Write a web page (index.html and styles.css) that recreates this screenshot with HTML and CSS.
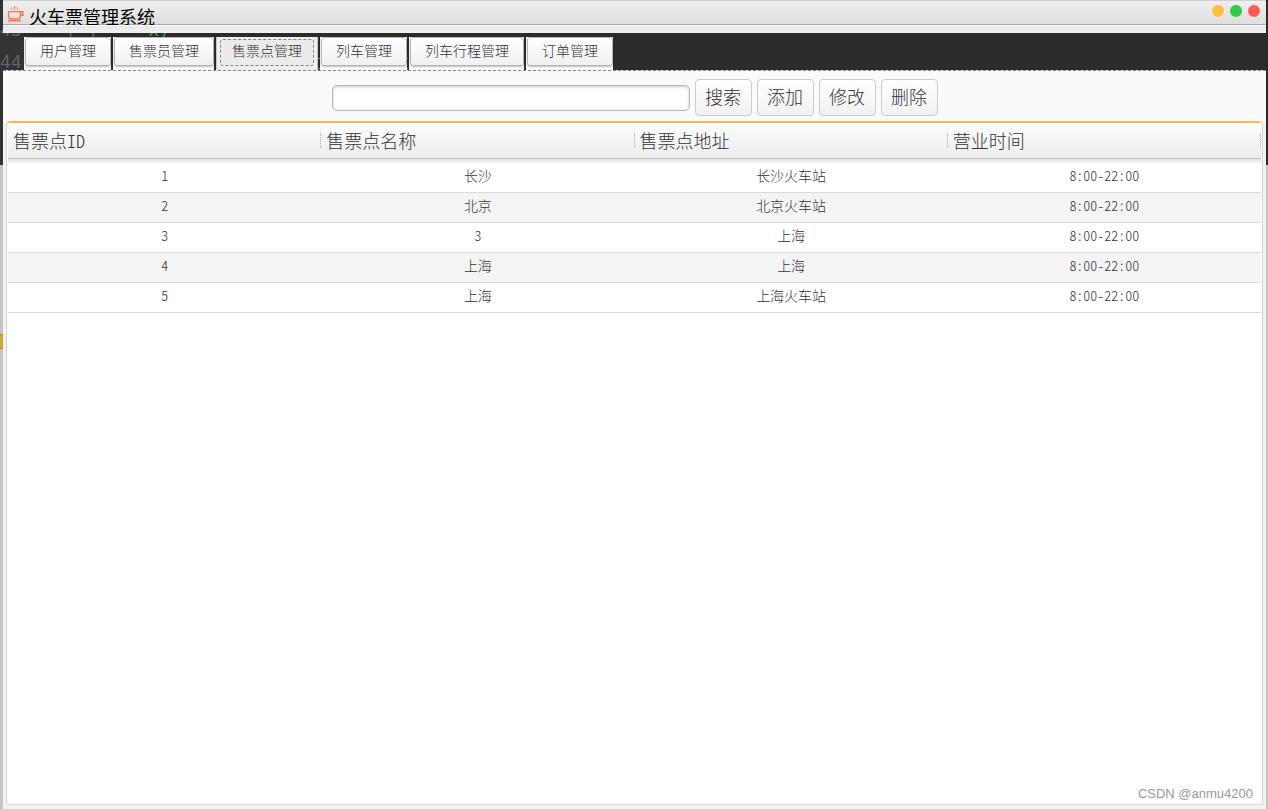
FILE: index.html
```html
<!DOCTYPE html>
<html lang="zh-CN">
<head>
<meta charset="utf-8">
<title>火车票管理系统</title>
<link rel="stylesheet" href="styles.css">
</head>
<body>
<div class="desktop" aria-hidden="true">
  <div class="editor">
    <div class="line cut"><span>43</span><span class="punct">[ ]</span><span class="string">x)</span></div>
    <div class="line"><span>44</span></div>
    <div class="mark"></div>
  </div>
  <div class="tool"></div>
</div>
<div class="window">
  <header class="titlebar">
    <svg class="logo" width="18" height="18" viewBox="0 0 18 18" fill="none" stroke="#fb7550" stroke-width="1.4">
      <path d="M1.6 6.6h11.8v4.4q0 3-3 3H4.6q-3 0-3-3z"/>
      <path d="M13.4 6.7h2.5v3.6h-2.6M1 15.8h13"/>
      <path d="M4.5 2.5v2M7.5 1v3.5M10.5 2.5v2" stroke-width="1"/>
    </svg>
    <h1 class="title">火车票管理系统</h1>
    <div class="controls">
      <button class="dot min" aria-label="最小化"></button>
      <button class="dot max" aria-label="最大化"></button>
      <button class="dot close" aria-label="关闭"></button>
    </div>
  </header>
  <div class="trim"></div>
  <nav class="tabs">
    <div class="tab"><button>用户管理</button></div>
    <div class="tab"><button>售票员管理</button></div>
    <div class="tab active"><button>售票点管理</button></div>
    <div class="tab"><button>列车管理</button></div>
    <div class="tab"><button>列车行程管理</button></div>
    <div class="tab"><button>订单管理</button></div>
  </nav>
  <main class="content">
    <form class="search">
      <input class="field" type="text" aria-label="搜索">
      <button class="action" type="button">搜索</button>
      <button class="action" type="button">添加</button>
      <button class="action" type="button">修改</button>
      <button class="action" type="button">删除</button>
    </form>
    <section class="panel">
      <table class="grid">
        <thead>
          <tr><th><div>售票点ID</div></th><th><div>售票点名称</div></th><th><div>售票点地址</div></th><th><div>营业时间</div></th></tr>
        </thead>
        <tbody>
          <tr><td>1</td><td>长沙</td><td>长沙火车站</td><td>8:00-22:00</td></tr>
          <tr><td>2</td><td>北京</td><td>北京火车站</td><td>8:00-22:00</td></tr>
          <tr><td>3</td><td>3</td><td>上海</td><td>8:00-22:00</td></tr>
          <tr><td>4</td><td>上海</td><td>上海</td><td>8:00-22:00</td></tr>
          <tr><td>5</td><td>上海</td><td>上海火车站</td><td>8:00-22:00</td></tr>
        </tbody>
      </table>
      <p class="credit">CSDN @anmu4200</p>
    </section>
  </main>
</div>
</body>
</html>
```

FILE: styles.css
```css
* { box-sizing: border-box; }

body {
  margin: 0;
  background: #c4c4c4;
  font-family: "Noto Sans CJK SC", "Liberation Sans", sans-serif;
  font-weight: 300;
  color: #333;
}

button, input { font: inherit; color: inherit; }

/* Desktop seen through the tab strip and round the window */
.desktop {
  position: absolute;
  inset: 0;
  z-index: -1;
  overflow: hidden;
}

.editor {
  height: 165px;
  padding-top: 26px;
  background: #2b2b2b linear-gradient(90deg, #313335 24px, transparent 24px);
  color: #606366;
  font: 18px/20px "DejaVu Sans Mono", monospace;
}

.line { display: flex; height: 32px; align-items: flex-end; }

.cut {
  height: 14px;
  margin-bottom: 0;
  overflow: hidden;
}

.punct { margin-left: 44px; }
.string { margin-left: 50px; color: #499c54; }

.mark {
  position: absolute;
  top: 58px;
  left: 318px;
  width: 90px;
  height: 11px;
  border: solid #cb772f;
  border-width: 1px 0;
}

.tool {
  width: 3px;
  height: 15px;
  margin-top: 169px;
  background: #d1a63a;
  border: solid #b98412;
  border-width: 1px 0;
}

.window {
  display: flex;
  flex-direction: column;
  min-height: 100vh;
  margin: 0 2px 0 3px;
}

.titlebar {
  display: flex;
  align-items: center;
  height: 25px;
  padding: 0 5px 0 4px;
  border-top: 1px solid #d0d0d0;
  border-bottom: 1px solid #a9a9a9;
  background: linear-gradient(#efefef, #dedede);
}

.logo { margin-top: 2px; }

.title {
  flex: 1;
  margin: 0 0 0 4px;
  padding-top: 6px;
  font-size: 18px;
  line-height: 24px;
  font-weight: 400;
  color: #000;
}

.controls { display: flex; gap: 4px; padding-bottom: 3px; }

.dot {
  width: 14px;
  height: 14px;
  padding: 0;
  border: 1px solid #f6f2ee;
  border-radius: 50%;
}

.min { background: #ffbd44; }
.max { background: #35c749; }
.close { background: #ff5c56; }

.trim {
  height: 8px;
  border-top: 1px solid #fff;
  background: linear-gradient(#e8e8e8, #f1f1f1);
}

.tabs {
  display: flex;
  gap: 2px;
  height: 37px;
  padding: 4px 0 0 21px;
}

.tab { background: #fff; }

.tab button {
  display: block;
  height: 29px;
  margin-left: 1px;
  padding: 0 14px 4px;
  border: 1px solid #b5b5b5;
  border-radius: 3px;
  background: linear-gradient(#fff, #f0f0f0);
  box-shadow: 0 1px 2px #0004;
  font-size: 14px;
  line-height: 22px;
}

.tab.active {
  padding: 2px 3px 0;
  border: solid #c4c4c4;
  border-width: 0 1px;
  background: #eee;
}

.tab.active button {
  height: 27px;
  margin: 0;
  padding: 0 11px 5px;
  border: 1px dashed #888;
  background: #ebebeb;
  box-shadow: none;
  line-height: 20px;
}

.content {
  display: flex;
  flex: 1;
  flex-direction: column;
  padding: 0 3px 4px;
  border-top: 1px dashed #888;
  background: linear-gradient(#fafafa 51px, #f3f3f3 51px);
}

.search {
  display: flex;
  align-items: center;
  justify-content: center;
  gap: 5px;
  padding: 8px 0 5px;
}

.field {
  width: 358px;
  height: 26px;
  padding: 0 6px;
  border: 1px solid #b5b5b5;
  border-radius: 5px;
  background: #fff;
  box-shadow: inset 0 1px 3px #0003;
  font-size: 14px;
}

.action {
  min-width: 57px;
  height: 37px;
  padding: 0 9px 3px;
  border: 1px solid #ccc;
  border-radius: 4px;
  background: linear-gradient(#fff, #f1f1f1);
  font-size: 18px;
  line-height: 32px;
}

.panel {
  display: flex;
  flex: 1;
  flex-direction: column;
  border: 1px solid #d4d4d4;
  border-top: 2px solid #ffb951;
  border-radius: 5px 5px 2px 2px;
  background: #fff;
}

.grid {
  width: 100%;
  padding: 0 1px;
  border-spacing: 0;
  table-layout: fixed;
  font-feature-settings: "hwid";
}

.grid th {
  height: 36px;
  padding: 0;
  border-bottom: 1px solid #c2c2c2;
  background: linear-gradient(#fdfdfd, #ececec);
  font-size: 18px;
  font-weight: 300;
  text-align: left;
}

.grid th div {
  height: 15px;
  padding-left: 5px;
  border-right: 1px dotted #aaa;
  line-height: 15px;
}

.grid td {
  height: 30px;
  padding: 0 0 4px;
  border-bottom: 1px solid #dadada;
  font-size: 14px;
  line-height: 25px;
  text-align: center;
}

.grid tbody tr:nth-child(even) { background: #f4f4f4; }

.grid tbody tr:first-child td {
  height: 34px;
  padding-top: 4px;
  background: linear-gradient(#e0e0e0, #fff 5px);
}

.credit {
  margin: auto 9px 1px;
  font: 13px/18px "Liberation Sans", sans-serif;
  color: #999;
  text-align: right;
}
```
